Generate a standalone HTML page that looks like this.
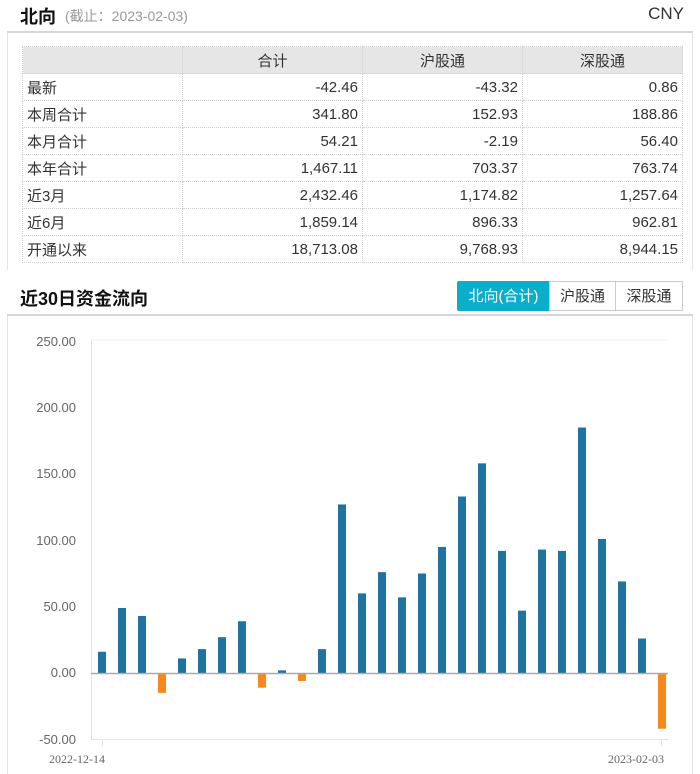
<!DOCTYPE html>
<html><head><meta charset="utf-8"><style>
*{margin:0;padding:0;box-sizing:border-box}
body{width:700px;height:774px;background:#fff;font-family:"Liberation Sans","Noto Sans CJK SC",sans-serif;overflow:hidden;position:relative;color:#333}
.box{position:absolute;left:7px;right:7px;border-left:1px solid #e4e4e4;border-right:1px solid #e4e4e4}
.hd{position:absolute;left:7px;width:686px;border-bottom:2px solid #d6d6d6}
table{position:absolute;left:22px;top:46px;width:661px;border-collapse:collapse;font-size:15px}
td{border:1px dotted #d0d0d0;height:27px;padding:0 4px;text-align:right;color:#333}
td:first-child{text-align:left;width:160px}
tr.h td{background:#e6e6e6;text-align:center}
.btn{position:absolute;top:281px;height:30px;font-size:15px;line-height:30px;text-align:center;border:1px solid #ccc;color:#333}
</style></head><body>
<div class="box" style="top:0;height:774px"></div>
<div class="hd" style="top:0;height:33px;background:#fff"></div>
<div style="position:absolute;left:20px;top:3px;font-size:18px;font-weight:bold;color:#111">北向</div>
<div style="position:absolute;left:65px;top:6px;font-size:14px;color:#999">(截止：2023-02-03)</div>
<div style="position:absolute;right:16px;top:4px;font-size:17px;color:#333">CNY</div>
<table>
<tr class="h"><td></td><td style="text-align:center">合计</td><td style="text-align:center">沪股通</td><td style="text-align:center">深股通</td></tr>
<tr><td>最新</td><td style="width:180px">-42.46</td><td style="width:160px">-43.32</td><td>0.86</td></tr>
<tr><td>本周合计</td><td>341.80</td><td>152.93</td><td>188.86</td></tr>
<tr><td>本月合计</td><td>54.21</td><td>-2.19</td><td>56.40</td></tr>
<tr><td>本年合计</td><td>1,467.11</td><td>703.37</td><td>763.74</td></tr>
<tr><td>近3月</td><td>2,432.46</td><td>1,174.82</td><td>1,257.64</td></tr>
<tr><td>近6月</td><td>1,859.14</td><td>896.33</td><td>962.81</td></tr>
<tr><td>开通以来</td><td>18,713.08</td><td>9,768.93</td><td>8,944.15</td></tr>
</table>
<div class="hd" style="top:270px;height:46px;background:#fff"></div>
<div style="position:absolute;left:20px;top:285px;font-size:18px;font-weight:bold;color:#111">近30日资金流向</div>
<div class="btn" style="left:457px;width:93px;background:#0aaecb;border-color:#0aaecb;color:#fff;border-radius:2px 0 0 2px">北向(合计)</div>
<div class="btn" style="left:549px;width:67px">沪股通</div>
<div class="btn" style="left:615px;width:68px">深股通</div>
<svg style="position:absolute;left:0;top:0" width="700" height="774">
<g font-family="Liberation Sans,sans-serif" font-size="13" fill="#666" text-anchor="end">
<text x="76" y="346">250.00</text><text x="76" y="412">200.00</text><text x="76" y="478">150.00</text><text x="76" y="545">100.00</text><text x="76" y="611">50.00</text><text x="76" y="677">0.00</text><text x="76" y="744">-50.00</text>
</g>
<line x1="91.5" y1="340" x2="91.5" y2="739" stroke="#dde3ee"/>
<line x1="91" y1="340" x2="668" y2="340" stroke="#eef0f5"/>
<line x1="91" y1="739.5" x2="668" y2="739.5" stroke="#dde3ee"/>
<line x1="102.5" y1="739" x2="102.5" y2="746" stroke="#dde3ee"/>
<line x1="661.5" y1="739" x2="661.5" y2="746" stroke="#dde3ee"/>
<g id="bars"></g>
<line x1="91" y1="673.5" x2="668" y2="673.5" stroke="#aaa" stroke-width="1.5"/>
<g font-family="Liberation Serif,serif" font-size="12" fill="#666">
<text x="49" y="763">2022-12-14</text><text x="608" y="763">2023-02-03</text>
</g>
</svg>
<script>
var v=[16,49,43,-15,11,18,27,39,-11,2,-6,18,127,60,76,57,75,95,133,158,92,47,93,92,185,101,69,26,-42];
var g=document.getElementById('bars'),s='';
v.forEach(function(d,i){var cx=102+i*20,h=Math.abs(d)*1.327,y=d>=0?673-h:673;
s+='<rect x="'+(cx-4)+'" y="'+y+'" width="8" height="'+h+'" fill="'+(d>=0?'#21739f':'#f7891c')+'"/>';});
g.innerHTML=s;
</script>
</body></html>
